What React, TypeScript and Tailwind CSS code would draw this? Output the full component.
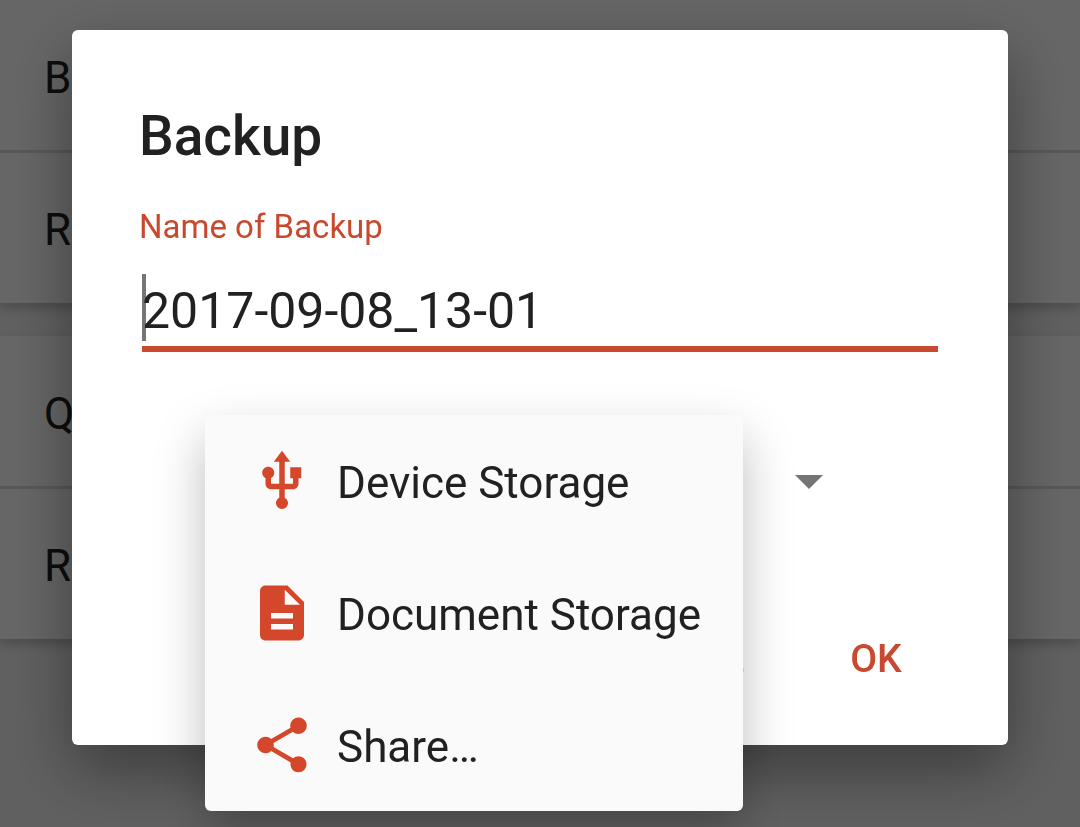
import { useState } from 'react';
import { MdDescription, MdShare, MdUsb } from 'react-icons/md';

const cards = [
  ['B', 'R'],
  ['Q', 'R'],
];

const targets = [
  { id: 'device', label: 'Device Storage', icon: <MdUsb /> },
  { id: 'document', label: 'Document Storage', icon: <MdDescription /> },
  { id: 'share', label: 'Share…', icon: <MdShare /> },
];

function SettingsList() {
  return (
    <main className="flex flex-col gap-[33px]">
      {cards.map((rows, index) => (
        <ul
          key={index}
          className="divide-y-3 divide-[#dcdcdc] bg-white pt-[3px] shadow-[0_6px_10px_rgba(0,0,0,0.2)]"
        >
          {rows.map((row, i) => (
            <li
              key={i}
              className="flex h-[150px] items-center px-11 pt-[3px] text-[44px]"
            >
              {row}
            </li>
          ))}
        </ul>
      ))}
    </main>
  );
}

interface TargetPickerProps {
  value: string;
  onChange: (value: string) => void;
}

/** Drop-down for the backup target, with its menu open on top of it. */
function TargetPicker({ value, onChange }: TargetPickerProps) {
  return (
    <div className="relative mr-[166px] ml-[133px] mt-[63px] h-[132px]">
      <select
        aria-label="Backup target"
        value={value}
        onChange={(e) => onChange(e.target.value)}
        className="h-full w-full appearance-none px-[132px] text-[44px] outline-none"
      >
        {targets.map((target) => (
          <option key={target.id} value={target.id}>
            {target.label}
          </option>
        ))}
      </select>
      <svg
        viewBox="0 0 28 14"
        className="pointer-events-none absolute top-[60px] right-[19px] h-[14px] w-7 fill-[#757575]"
      >
        <path d="M0 0h28L14 14z" />
      </svg>

      <div
        role="menu"
        className="absolute top-0 left-0 rounded-[6px] bg-[#fafafa] shadow-[0_22px_50px_rgba(0,0,0,0.26)]"
      >
        {targets.map((target) => (
          <button
            key={target.id}
            type="button"
            role="menuitem"
            onClick={() => onChange(target.id)}
            className="flex h-[132px] w-full items-center gap-[22px] pr-[42px] pl-11 text-[44px] whitespace-nowrap"
          >
            <span className="text-[66px] text-[#d5472a]">{target.icon}</span>
            <span className="pt-1">{target.label}</span>
          </button>
        ))}
      </div>
    </div>
  );
}

export default function App() {
  const [name, setName] = useState('2017-09-08_13-01');
  const [target, setTarget] = useState('device');

  return (
    <div className="min-h-screen bg-[#f0f0f0] font-[Roboto,sans-serif] text-[#212121]">
      <SettingsList />

      <div className="fixed inset-0 bg-black/60 px-[72px] pt-[30px]">
        <form
          role="dialog"
          aria-labelledby="backup-title"
          onSubmit={(e) => e.preventDefault()}
          className="flex flex-col rounded-[6px] bg-white pt-[74px] pb-[37px] shadow-[0_24px_64px_rgba(0,0,0,0.4)]"
        >
          <h1
            id="backup-title"
            className="px-[67px] text-[55px] leading-[64px] font-medium"
          >
            Backup
          </h1>

          <label
            htmlFor="backup-name"
            className="mt-10 px-[67px] text-[33px] leading-[38px] text-[#c9492f]"
          >
            Name of Backup
          </label>
          <div className="relative mx-[70px] mt-[26px]">
            {/* text cursor */}
            <span className="absolute top-[2px] left-0 h-[67px] w-1 bg-[#757575]" />
            <input
              id="backup-name"
              value={name}
              onChange={(e) => setName(e.target.value)}
              className="relative block h-20 w-full border-b-6 border-[#c9492f] pt-[3px] text-[50px] outline-none"
            />
          </div>

          <TargetPicker value={target} onChange={setTarget} />

          <div className="mt-[61px] flex justify-end gap-[22px] px-11 text-[39px] font-medium text-[#c9492f]">
            <button type="button" className="h-[100px] px-[22px] pt-[3px]">
              CANCEL
            </button>
            <button
              type="submit"
              className="h-[100px] min-w-44 px-[22px] pt-[3px]"
            >
              OK
            </button>
          </div>
        </form>
      </div>
    </div>
  );
}
